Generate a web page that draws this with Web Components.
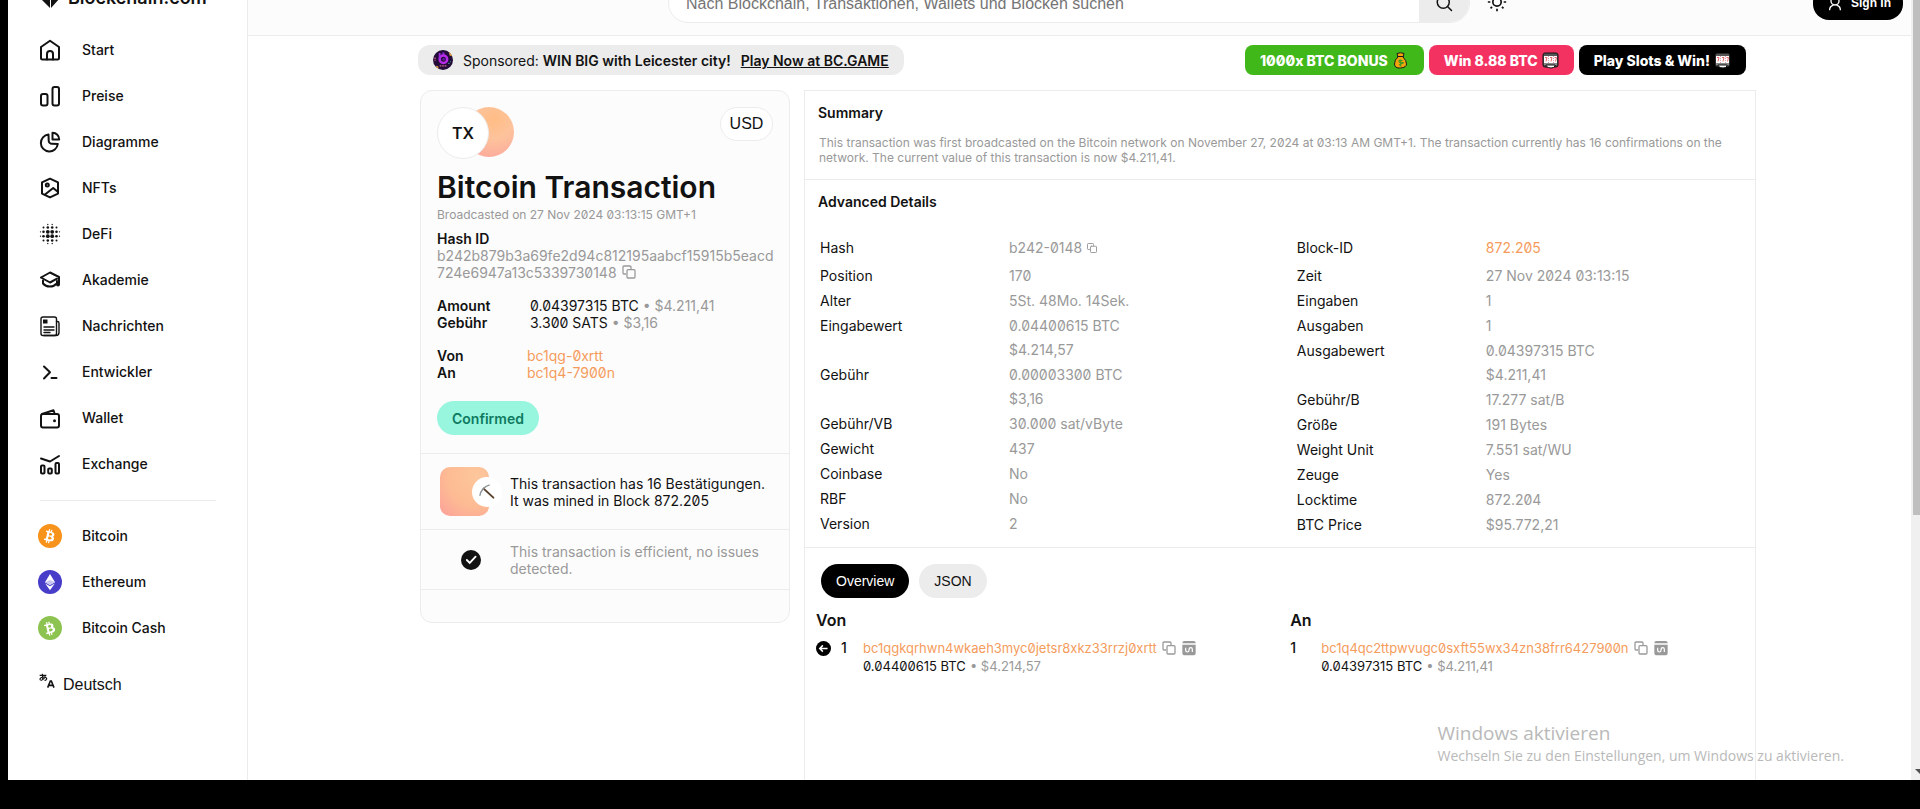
<!DOCTYPE html>
<html lang="de">
<head>
<meta charset="utf-8">
<title>Bitcoin Transaction</title>
<style>
  html, body { margin: 0; background: #000; }
  body { min-height: 100vh; box-sizing: border-box; padding: 0 0 29px 8px; display: flex; color: #121212;
    font-family: Inter, "Liberation Sans", sans-serif; font-size: 14px; line-height: 17px; font-feature-settings: "zero" 1; }
</style>
</head>
<body>
<explorer-app></explorer-app>
<script>
const define = (name, html, setup) => {
  const template = document.createElement('template');
  template.innerHTML = '<style>:host{display:block;box-sizing:border-box}*{box-sizing:border-box}a{color:inherit;text-decoration:none}button{font:inherit;color:inherit;border:0;margin:0;padding:0;background:none;font-feature-settings:inherit;font-family:"Liberation Sans",Arial,sans-serif}h1,h2,h3,p,dl,dd,ul{margin:0;padding:0}</style>' + html;
  customElements.define(name, class extends HTMLElement {
    constructor() {
      super();
      this.attachShadow({ mode: 'open' }).append(template.content.cloneNode(true));
    }
    connectedCallback() { if (setup) setup(this, this.shadowRoot); }
  });
};

const line = (body, w = 2) => `<g fill="none" stroke="currentColor" stroke-width="${w}" stroke-linejoin="round" stroke-linecap="round">${body}</g>`;
const coinB = '<path fill="#fff" d="M16.4 10.7c.2-1.5-.9-2.2-2.4-2.7l.5-2-1.2-.3-.5 1.9-1-.2.5-2-1.2-.3-.5 2-2.500-.6-.3 1.3s.9.2.9.2c.5.1.6.4.6.7l-1.4 5.6c-.1.1-.2.4-.6.3l-.9-.2-.6 1.4 2.4.6-.5 2 1.2.3.5-2 1 .2-.5 2 1.2.3.5-2c2.1.4 3.6.2 4.3-1.6.5-1.5 0-2.3-1.1-2.9.8-.2 1.4-.7 1.6-2zm-2.8 3.9c-.4 1.5-2.9.7-3.7.5l.7-2.7c.8.2 3.4.6 3 2.2zm.4-3.9c-.4 1.4-2.4.7-3.1.5l.6-2.4c.7.2 2.8.5 2.5 1.9z"/>';
const slots = frame => `<rect x="1" y="1" width="15" height="14" rx="2" fill="#555" stroke="${frame}" stroke-width="1"/><path fill="#fff" d="M2 4h13v7H2z"/><path stroke="#d99ab0" stroke-dasharray="1 1" d="M6.500 4v7M11.500 4v7"/><path fill="none" stroke="#e56b6b" d="M3 5.500h2L4 9.500M8 5.500h2L9 9.500M12.500 5.500h2l-1 4"/><path fill="#888" d="M2 11h13v2H2z"/><path d="M4 13h9v1q-1 2-4 2t-5-2z" fill="#fff" stroke="#111"/>`;
const icons = {
  home: line('<path d="M3 9 12 2.800 21 9v11a1.500 1.500 0 0 1-1.500 1.500h-15A1.500 1.500 0 0 1 3 20z"/><path d="M9 21.500v-5.500a3 3 0 0 1 6 0v5.500"/>'),
  bars: line('<rect x="3" y="10" width="6.500" height="11.500" rx="2"/><rect x="14.500" y="3" width="6.500" height="18.500" rx="2"/>'),
  pie: line('<path d="M10.500 4.500a8.500 8.500 0 1 0 9.300 9.500l-5.800-.2a3.200 3.200 0 0 1-3.300-3.300z"/><path d="M14.500 2.800v6.700h6.700c0-3.800-2.800-6.700-6.700-6.700z"/>'),
  nft: line('<path d="m12 2.700 8 3.700v11.200l-8 3.800-8-3.800V6.400z"/><circle cx="9.300" cy="9" r="1.500"/><path d="m7 18.500 8.200-6.500 4.800 4"/>'),
  defi: (() => { let s = ''; const at = [-9.5, -6.5, -2.2, 2.2, 6.5, 9.5], ring = i => i < 3 ? 3 - i : i - 2;
    at.forEach((x, i) => at.forEach((y, j) => {
      const a = Math.max(ring(i), ring(j)), b = Math.min(ring(i), ring(j));
      if (a === 3 && b > 1) return;
      s += `<circle cx="${12 + x}" cy="${12 + y}" r="${a === 1 ? 1.9 : a === 2 ? (b === 1 ? 1.3 : 1) : .65}"/>`; })); return s; })(),
  cap: line('<path d="M3 9.500 12 4.500l9 4.500v7.500a1 1 0 0 1-2 0V13M3 9.500l9 5 7-3.800"/><path d="M5 12.500v3c3.500 4 10 4 13 .5"/>'),
  news: line('<rect x="3" y="3" width="15.500" height="18.500" rx="2"/><path d="M18.500 7.500h.8a1.700 1.700 0 0 1 1.700 1.700V18.500a3 3 0 0 1-3 3H6M6 13h10M6 16h10M6 18.500h6"/>', 1.4) + '<path d="M5 5.500h4.500v4H5z"/>',
  code: line('<path d="m6 6.500 6 5.800-6 6.200M13.500 18h5"/>'),
  wallet: line('<rect x="3" y="8" width="18" height="13.500" rx="2"/><path d="M4 8 15.500 4.300l.8 2.200"/>') + '<circle cx="16.500" cy="14.700" r="1.500"/>',
  exchange: line('<path d="m3 6.500 9 3 9-5.500"/><rect x="3" y="13.500" width="3.500" height="8" rx="1"/><rect x="10.200" y="16.500" width="3.600" height="5" rx="1"/><rect x="17.500" y="11" width="3.500" height="10.500" rx="1"/>'),
  btc: '<circle cx="12" cy="12" r="12" fill="#f7931a"/>' + coinB,
  bch: '<circle cx="12" cy="12" r="12" fill="#8dc351"/><g transform="rotate(-28 12 12)">' + coinB + '</g>',
  eth: '<circle cx="12" cy="12" r="12" fill="#473dc9"/><path fill="#fff" d="m12 4 5 8.200-5 2.800-5-2.800z"/><path fill="#c8c5ef" d="m12 9.900 5 2.300-5 2.800-5-2.800z"/><path fill="#fff" d="m7.200 13.500 4.800 2.700 4.800-2.700L12 20.300z"/>',
  logo: '<path d="M0 10 10 0v20zM20 10 11 0v20z"/><path stroke="#fff" d="M10.500 0v20"/>',
  search: line('<circle cx="11" cy="11" r="8"/><path d="m17 17 5 5"/>', 2),
  sun: line('<circle cx="12" cy="12" r="5"/>') + '<path d="M11 1h2v3h-2zM11 20h2v3h-2zM1 11h3v2H1zM20 11h3v2h-3zM3.500 5l1.500-1.500 1.800 1.800-1.500 1.500zM17.200 5.300 19 3.500 20.500 5l-1.800 1.800zM3.500 19l1.800-1.800 1.500 1.500L5 20.500zM17.200 18.700l1.500-1.500 1.800 1.800-1.500 1.500z"/>',
  user: line('<circle cx="12" cy="9" r="6"/><path d="M4 22c0-3 2-5.500 5-6.500M20 22c0-3-2-5.500-5-6.500"/>', 2),
  copy: line('<path d="M7 15H4.500A1.500 1.500 0 0 1 3 13.500v-9A1.500 1.500 0 0 1 4.500 3h9A1.500 1.500 0 0 1 15 4.500V7"/><rect x="9" y="8.500" width="12" height="12.500" rx="1.500"/>', 1.9),
  script: '<path d="M5 1.500h14a3 3 0 0 1 3 3V5H2v-.5a3 3 0 0 1 3-3zM2 7h20v12a4 4 0 0 1-4 4H6a4 4 0 0 1-4-4z"/><path fill="none" stroke="#fff" stroke-width="1.800" d="M7 11.500v4q0 2.500 2.500 2.500t2.500-2.500q0-4 2.500-4t2.500 2.500v4"/>',
  back: '<circle cx="12" cy="12" r="12"/><path fill="none" stroke="#fff" stroke-width="2.400" d="M18.500 12H7M11 7l-5 5 5 5"/>',
  check: '<circle cx="12" cy="12" r="12"/><path fill="none" stroke="#fff" stroke-width="2.200" stroke-linecap="round" d="m7 12 3.500 3.500L17.500 8"/>',
  pick: '<path d="m7.500 7.500 13 12" stroke="#58402c" stroke-width="2.600" stroke-linecap="round"/><path fill="none" stroke="#8c9396" stroke-width="2" d="M2.500 17C3 11 8 4.500 15.500 2.500"/>',
  bag: '<path d="M5 1.500q3.500-1.500 7 0L11 5q3.500 3.500 3.500 7t-6 4-6-4T6 5z" fill="#f5a50c" stroke="#1b1b1b"/><path stroke="#1b1b1b" d="M5.500 4.500h6"/><path fill="none" stroke="#3a9b22" stroke-width="1.200" d="M10.500 8.500q-3.500-1-3.500.8t3.300 1.400-3.300 2.300M8.700 7.500v7"/>',
  slots: slots('#111'),
  slotsDark: slots('#000'),
  badge: '<circle cx="12" cy="12" r="12" fill="#230c3a"/><path d="M19 2.500a12 12 0 0 1 4 5l-3-1zM3 19l3 .5 1 3a12 12 0 0 1-4-3.500z" fill="#f0a640"/><circle cx="12.500" cy="11" r="4.500" fill="none" stroke="#b92be8" stroke-width="3"/><path d="M8 3.500v8M12.500 3v3" stroke="#a12be0" stroke-width="2.200"/><circle cx="13" cy="11" r="1.800" fill="#5c1a92"/><path stroke="#d4668c" stroke-width="1.500" stroke-dasharray="2 1" d="M8 19h8M2.500 9v4"/><path stroke="#40b99b" d="M18 16h2M20.500 14h1"/>',
  language: '<g fill="none" stroke="currentColor" stroke-width="1.700"><path d="M1 3.500h10M5 1l.6 9.500M9.500 4.800Q7.500 10 4 10.800 1 11 1.600 8.500C3 5.500 10.500 5.500 11.500 8q.3 2.700-3.200 3.300"/><path stroke-width="2.400" d="m13 22 4-10h1.500l4 10M14.500 18.500h6"/></g>'
};
const boxes = { logo: '0 0 20 20', bag: '0 0 17 17', slots: '0 0 17 17', slotsDark: '0 0 17 17' };

define('x-icon', '<style>:host{display:inline-block;flex:none;line-height:0;width:var(--size,24px);height:var(--size,24px)}svg{width:100%;height:100%;fill:currentColor}</style><span></span>',
  (el, root) => { const n = el.getAttribute('name');
    root.querySelector('span').innerHTML = `<svg viewBox="${boxes[n] || '0 0 24 24'}" aria-hidden="true">${icons[n]}</svg>`; });

define('nav-item', `<style>
  a{display:flex;align-items:center;height:46px;gap:20px;font-weight:500}
  span{padding-bottom:2px}
</style><a href="#"><span><slot></slot></span></a>`,
  (el, root) => { const icon = document.createElement('x-icon');
    icon.setAttribute('name', el.getAttribute('icon'));
    root.querySelector('a').prepend(icon); });

define('side-bar', `<style>
  :host{flex:0 0 240px;background:#fff;border-right:1px solid #ececec;display:flex;flex-direction:column;padding:0 31px 0 30px}
  .brand{height:27px;display:flex;align-items:flex-start;overflow:hidden;padding-left:2px}
  .brand a{display:flex;align-items:center;gap:8px;font-size:18px;line-height:24px;font-weight:600;margin-top:-14px}
  .brand x-icon{--size:20px}
  hr{width:100%;border:0;border-top:1px solid #ececec;margin:13px 0 12px}
  .rule{padding-left:2px}
  .lang{display:flex;align-items:center;gap:8px;margin-top:22px;padding-left:1px;font-size:16px;line-height:24px}
  .lang x-icon{--size:16px;margin-bottom:8px}
</style>
<div class="brand"><a href="#"><x-icon name="logo"></x-icon><span>Blockchain.com</span></a></div>
<nav>
<nav-item icon="home">Start</nav-item><nav-item icon="bars">Preise</nav-item><nav-item icon="pie">Diagramme</nav-item><nav-item icon="nft">NFTs</nav-item><nav-item icon="defi">DeFi</nav-item><nav-item icon="cap">Akademie</nav-item><nav-item icon="news">Nachrichten</nav-item><nav-item icon="code">Entwickler</nav-item><nav-item icon="wallet">Wallet</nav-item><nav-item icon="exchange">Exchange</nav-item>
<div class="rule"><hr></div>
<nav-item icon="btc">Bitcoin</nav-item><nav-item icon="eth">Ethereum</nav-item><nav-item icon="bch">Bitcoin Cash</nav-item>
</nav>
<button class="lang"><x-icon name="language"></x-icon><span>Deutsch</span></button>`);

define('top-bar', `<style>
  :host{display:flex;height:36px;overflow:hidden;align-items:flex-end;background:#fdfcfc;border-bottom:1px solid #ececec;padding:0 8px 12px 420px}
  .search{flex:1;max-width:802px;display:flex;height:40px;border:1px solid #ececec;border-radius:20px;overflow:hidden;background:#fff}
  input{flex:1;min-width:0;border:0;outline:0;padding:2px 17px 0;font:16px/20px "Liberation Sans",Arial,sans-serif;background:none}
  input::placeholder{color:#757575;opacity:1}
  .search button{width:50px;background:#ececec;display:grid;place-items:center}
  .search x-icon{--size:18px}
  .theme{margin:0 auto 5px 17px;height:28px}
  .sign{display:flex;align-items:center;gap:8px;height:34px;width:90px;padding-left:14px;margin-bottom:3px;background:#000;color:#fff;border-radius:16px;font:bold 12px/16px "Liberation Sans",sans-serif}
  .sign x-icon{--size:16px}
</style>
<form class="search" role="search"><input aria-label="Suche" placeholder="Nach Blockchain, Transaktionen, Wallets und Blocken suchen"><button type="button" aria-label="Suchen"><x-icon name="search"></x-icon></button></form>
<button class="theme" aria-label="Design wechseln"><x-icon name="sun" style="--size:20px"></x-icon></button>
<button class="sign"><x-icon name="user"></x-icon><span>Sign In</span></button>`);

define('promo-bar', `<style>
  :host{display:flex;justify-content:space-between;align-items:center;gap:20px;padding:9px 165px 15px 170px}
  .ad{display:flex;align-items:center;height:30px;border-radius:12px;background:#ececec;padding:0 15px;white-space:nowrap}
  .ad x-icon{--size:20px;margin-right:10px}
  .ad b{font-weight:600;margin:0 10px 0 4px}
  .ad a{font-weight:600;text-decoration:underline}
  ul{display:flex;gap:5px;list-style:none}
  li a{display:flex;align-items:center;gap:4px;height:30px;border-radius:8px;padding:0 15px;background:var(--tone);color:#fff;font-weight:800;white-space:nowrap}
  li x-icon{--size:17px}
</style>
<div class="ad"><x-icon name="badge"></x-icon><span>Sponsored:</span><b>WIN BIG with Leicester city!</b><a href="#">Play Now at BC.GAME</a></div>
<ul>
<li style="--tone:#41b819"><a href="#">1000x BTC BONUS <x-icon name="bag"></x-icon></a></li>
<li style="--tone:#f43262"><a href="#">Win 8.88 BTC <x-icon name="slots"></x-icon></a></li>
<li style="--tone:#000"><a href="#">Play Slots &amp; Win! <x-icon name="slotsDark"></x-icon></a></li>
</ul>`);

define('tx-card', `<style>
  :host{flex:0 0 370px;min-width:0;align-self:flex-start;border:1px solid #ececec;border-radius:12px;background:#fcfcfc}
  .main{padding:16px 16px 18px;border-bottom:1px solid #ececec}
  .top{display:flex;justify-content:space-between;align-items:flex-start;height:52px}
  .coins{display:flex}
  .tx{width:52px;height:52px;border-radius:50%;border:1px solid #ececec;background:#fff;display:grid;place-items:center;font-size:16px;font-weight:600;z-index:1}
  .disc{width:50px;height:50px;border-radius:50%;margin-left:-25px;background:radial-gradient(circle at 60% 25%,#ffbd85,#fdc39c 40%,#fca09c)}
  .usd{height:34px;width:53px;border:1px solid #ececec;border-radius:17px;background:#fff;font-size:16px;padding-bottom:2px}
  h1{font-size:30px;line-height:36px;font-weight:600;margin-top:10px}
  .when{font-size:12px;line-height:16px;color:#999;margin:2px 0 7px}
  h2{font-size:14px;line-height:17px;font-weight:600}
  .hash{color:#999;white-space:nowrap}
  .hash x-icon{--size:16px;vertical-align:top}
  dl{display:grid;grid-template-columns:93px 1fr;margin-top:16px}
  dl.links{grid-template-columns:90px 1fr}
  dt{font-weight:600}
  dd i{font-style:normal;color:#999}
  .links a{color:#f59c5c}
  .pill{display:flex;width:fit-content;align-items:center;height:34px;padding:0 15px;border-radius:17px;background:#98f6de;color:#0e7a5f;font-weight:600;margin-top:20px}
  .row{display:flex;align-items:center;border-bottom:1px solid #ececec;height:76px;padding:0 16px 0 19px}
  .row.ok{height:60px}
  .ok p{color:#999}
  .fig{flex:0 0 70px;display:flex;align-items:center}
  .tile{width:49px;height:49px;border-radius:10px;background:radial-gradient(circle at 75% 20%,#fdc69b,#fdbb93 55%,#fca09a);display:flex;align-items:center}
  .tile span{width:30px;height:30px;flex:none;margin-left:32px;border-radius:50%;background:#fff;display:grid;place-items:center}
  .tile x-icon{--size:18px}
  .ok .fig x-icon{--size:20px;margin-left:21px}
  .end{height:32px}
</style>
<div class="main">
<div class="top"><div class="coins"><span class="tx">TX</span><span class="disc"></span></div><button class="usd">USD</button></div>
<h1>Bitcoin Transaction</h1>
<p class="when">Broadcasted on 27 Nov 2024 03:13:15 GMT+1</p>
<h2>Hash ID</h2>
<p class="hash">b242b879b3a69fe2d94c812195aabcf15915b5eacd<br>724e6947a13c5339730148 <x-icon name="copy"></x-icon></p>
<dl><dt>Amount</dt><dd>0.04397315 BTC <i>• $4.211,41</i></dd><dt>Gebühr</dt><dd>3.300 SATS <i>• $3,16</i></dd></dl>
<dl class="links"><dt>Von</dt><dd><a href="#">bc1qg-0xrtt</a></dd><dt>An</dt><dd><a href="#">bc1q4-7900n</a></dd></dl>
<span class="pill">Confirmed</span>
</div>
<div class="row"><div class="fig"><div class="tile"><span><x-icon name="pick"></x-icon></span></div></div><p>This transaction has 16 Bestätigungen.<br>It was mined in Block 872.205</p></div>
<div class="row ok"><div class="fig"><x-icon name="check"></x-icon></div><p>This transaction is efficient, no issues<br>detected.</p></div>
<div class="end"></div>`);

define('detail-list', `<style>
  ::slotted(detail-row:first-child){padding-bottom:3px}
</style><slot></slot>`);
define('detail-row', `<style>
  dl{display:grid;grid-template-columns:189px 1fr}
  dt{line-height:25px} dd{color:#999;line-height:25px;display:flex;align-items:center;gap:4px}
  dd+dd{grid-column:2;line-height:24px}
</style><dl><dt></dt><dd><slot></slot></dd></dl>`,
  (el, root) => { root.querySelector('dt').textContent = el.getAttribute('label');
    if (el.hasAttribute('sub')) { const d = document.createElement('dd'); d.textContent = el.getAttribute('sub'); root.querySelector('dl').append(d); } });

define('tx-address', `<style>
  :host{display:flex;line-height:18px}
  .n{width:31px;font-weight:500}
  :host([input]) .n{width:22px}
  x-icon{--size:16px;color:#999}
  .back{display:none}
  :host([input]) .back{display:block;--size:15px;color:#000;margin:2px 10px 0 0}
  .line{display:flex;align-items:center;gap:4px;font-size:13px}
  a{color:#f59c5c}
  .usd{color:#999}
</style><x-icon class="back" name="back"></x-icon><span class="n">1</span>
<div><div class="line"><a href="#"><slot></slot></a><x-icon name="copy"></x-icon><x-icon name="script"></x-icon></div>
<div class="line"><span class="btc"></span><span class="usd"></span></div></div>`,
  (el, root) => { root.querySelector('.btc').textContent = el.getAttribute('btc'); root.querySelector('.usd').textContent = '• ' + el.getAttribute('usd'); });

define('tx-panel', `<style>
  :host{flex:1;border:1px solid #ececec;border-bottom:0}
  section{border-bottom:1px solid #ececec;padding:13px 0 15px 13px}
  section:last-child{border:0;padding-top:16px}
  h2{font-size:14px;line-height:17px;font-weight:600}
  .sum{height:89px;padding-right:15px}
  .sum h2{margin-bottom:14px}
  .sum p{font-size:12px;line-height:15px;color:#999;padding-left:1px}
  .adv{padding-bottom:10px}
  .lists{display:grid;grid-template-columns:51fr 49fr;padding-left:2px;margin-top:25px}
  .lists a{color:#f59c5c}
  .tabs{display:flex;gap:10px;padding-left:3px}
  .tabs button{height:34px;border-radius:17px;padding:0 15px;background:#ececec}
  .tabs .on{background:#000;color:#fff}
  .io{display:grid;grid-template-columns:101fr 99fr;margin-left:-2px}
  h3{font-size:16px;line-height:20px;font-weight:600;margin:12px 0 9px}
</style>
<section class="sum"><h2>Summary</h2><p>This transaction was first broadcasted on the Bitcoin network on November 27, 2024 at 03:13 AM GMT+1. The transaction currently has 16 confirmations on the network. The current value of this transaction is now $4.211,41.</p></section>
<section class="adv"><h2>Advanced Details</h2><div class="lists">
<detail-list><detail-row label="Hash">b242-0148 <x-icon name="copy" style="--size:12px"></x-icon></detail-row><detail-row label="Position">170</detail-row><detail-row label="Alter">5St. 48Mo. 14Sek.</detail-row><detail-row label="Eingabewert" sub="$4.214,57">0.04400615 BTC</detail-row><detail-row label="Gebühr" sub="$3,16">0.00003300 BTC</detail-row><detail-row label="Gebühr/VB">30.000 sat/vByte</detail-row><detail-row label="Gewicht">437</detail-row><detail-row label="Coinbase">No</detail-row><detail-row label="RBF">No</detail-row><detail-row label="Version">2</detail-row></detail-list>
<detail-list><detail-row label="Block-ID"><a href="#">872.205</a></detail-row><detail-row label="Zeit">27 Nov 2024 03:13:15</detail-row><detail-row label="Eingaben">1</detail-row><detail-row label="Ausgaben">1</detail-row><detail-row label="Ausgabewert" sub="$4.211,41">0.04397315 BTC</detail-row><detail-row label="Gebühr/B">17.277 sat/B</detail-row><detail-row label="Größe">191 Bytes</detail-row><detail-row label="Weight Unit">7.551 sat/WU</detail-row><detail-row label="Zeuge">Yes</detail-row><detail-row label="Locktime">872.204</detail-row><detail-row label="BTC Price">$95.772,21</detail-row></detail-list>
</div></section>
<section><div class="tabs"><button class="on">Overview</button><button>JSON</button></div>
<div class="io"><div><h3>Von</h3><tx-address input btc="0.04400615 BTC" usd="$4.214,57">bc1qgkqrhwn4wkaeh3myc0jetsr8xkz33rrzj0xrtt</tx-address></div><div><h3>An</h3><tx-address btc="0.04397315 BTC" usd="$4.211,41">bc1q4qc2ttpwvugc0sxft55wx34zn38frr6427900n</tx-address></div></div></section>`);

define('system-notice', `<style>
  :host{position:absolute;right:76px;bottom:15px;color:#b9b9b9;font-family:"Open Sans","Noto Sans",sans-serif;white-space:nowrap;pointer-events:none}
  strong{display:block;font-size:19px;line-height:26px;font-weight:400}
  span{display:block;font-size:14px;line-height:19px}
</style><strong>Windows aktivieren</strong><span>Wechseln Sie zu den Einstellungen, um Windows zu aktivieren.</span>`);

define('scroll-rail', `<style>
  :host{flex:0 0 9px;background:#f0f0f0;display:flex;flex-direction:column;justify-content:space-between;padding-left:2px;overflow:hidden}
  .thumb{height:66%;background:#bfbfbf}
  svg{width:7px;height:5px;margin:0 0 6px 2px;flex:none}
</style><div class="thumb"></div><svg viewBox="0 0 7 5"><path d="M0 0h9L5 5z" fill="#505050"/></svg>`);

define('explorer-app', `<style>
  :host{flex:1;display:flex;background:#fff;position:relative}
  main{flex:1;min-width:0;display:flex;flex-direction:column}
  .cols{flex:1;display:flex;gap:14px;padding:0 155px 0 172px}
</style><side-bar></side-bar><main><top-bar></top-bar><promo-bar></promo-bar><div class="cols"><tx-card></tx-card><tx-panel></tx-panel></div></main><scroll-rail></scroll-rail><system-notice></system-notice>`);
</script>
</body>
</html>
